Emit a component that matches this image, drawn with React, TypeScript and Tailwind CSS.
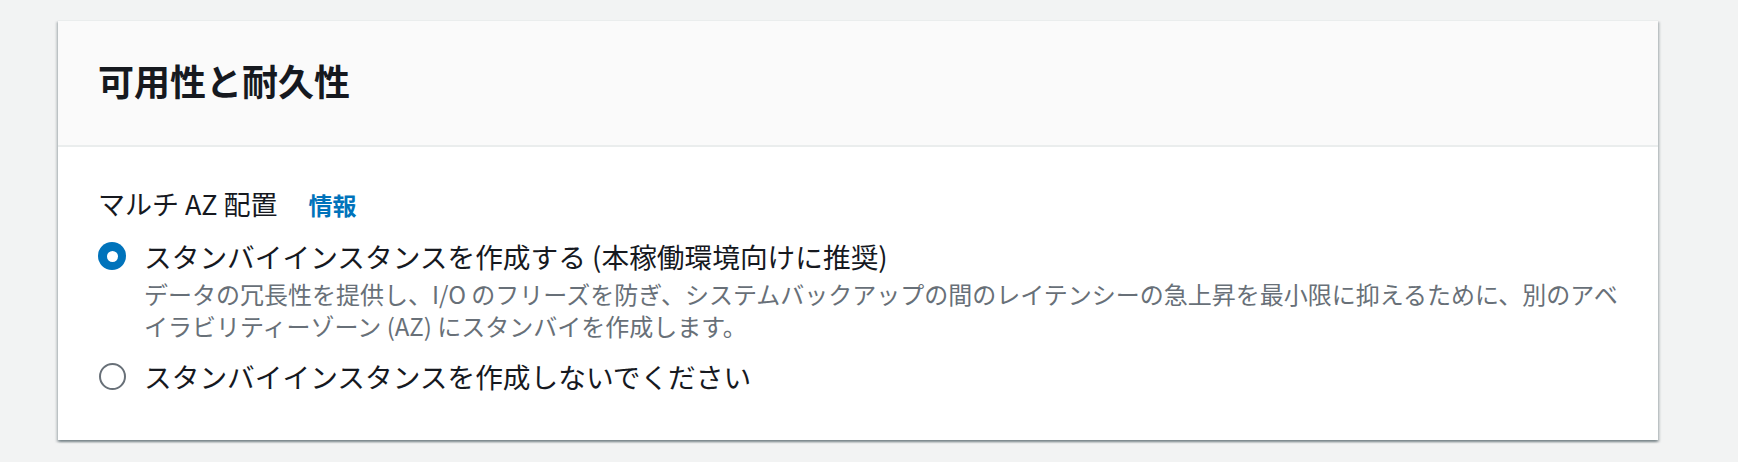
import { useState } from "react";

const FONT = { fontFamily: '"Noto Sans CJK JP", "Noto Sans", sans-serif' };

type Option = {
  id: string;
  label: string;
  description?: string;
};

const options: Option[] = [
  {
    id: "standby",
    label: "スタンバイインスタンスを作成する (本稼働環境向けに推奨)",
    description:
      "データの冗長性を提供し、I/O のフリーズを防ぎ、システムバックアップの間のレイテンシーの急上昇を最小限に抑えるために、別のアベイラビリティーゾーン (AZ) にスタンバイを作成します。",
  },
  {
    id: "none",
    label: "スタンバイインスタンスを作成しないでください",
  },
];

function Radio({ checked }: { checked: boolean }) {
  return checked ? (
    <span className="flex h-[28px] w-[28px] shrink-0 items-center justify-center rounded-full bg-[#0073bb]">
      <span className="h-[11px] w-[11px] rounded-full bg-white" />
    </span>
  ) : (
    <span className="h-[27px] w-[27px] shrink-0 rounded-full border-[2.5px] border-[#687078] bg-white" />
  );
}

export default function App() {
  const [selected, setSelected] = useState("standby");

  return (
    <main className="min-h-[462px] bg-[#f2f3f3] pl-[58px] pr-[80px] pt-[20px]" style={FONT}>
      <section className="w-[1600px] border-t border-[#eaeded] bg-white shadow-[0_2px_2px_0_rgba(0,28,36,0.3),2px_2px_2px_0_rgba(0,28,36,0.15),-2px_2px_2px_0_rgba(0,28,36,0.15)]">
        {/* Header */}
        <header className="border-b-2 border-[#eaeded] bg-[#fafafa] px-[40px] pb-[43px] pt-[37px]">
          <h2 className="text-[36px] font-bold leading-[44px] text-[#16191f]">可用性と耐久性</h2>
        </header>

        {/* Body */}
        <div className="px-[40px] pb-[42px] pt-[35px]">
          <div className="flex items-baseline gap-[31px] text-[#16191f]">
            <span className="text-[27px] leading-[44px]">マルチ AZ 配置</span>
            <a className="text-[24px] font-bold text-[#0073bb]" href="#">
              情報
            </a>
          </div>

          <div className="mt-[8px] flex flex-col gap-[12px]">
            {options.map((opt) => (
              <label
                key={opt.id}
                className="flex cursor-pointer items-start gap-[18px]"
                onClick={() => setSelected(opt.id)}
              >
                <span className="flex h-[44px] w-[28px] items-center justify-center">
                  <Radio checked={selected === opt.id} />
                </span>
                <span className="flex flex-col">
                  <span className="text-[27.7px] leading-[44px] text-[#16191f]">{opt.label}</span>
                  {opt.description && (
                    <span className="text-[24px] leading-[32px] text-[#687078]">{opt.description}</span>
                  )}
                </span>
              </label>
            ))}
          </div>
        </div>
      </section>
    </main>
  );
}
